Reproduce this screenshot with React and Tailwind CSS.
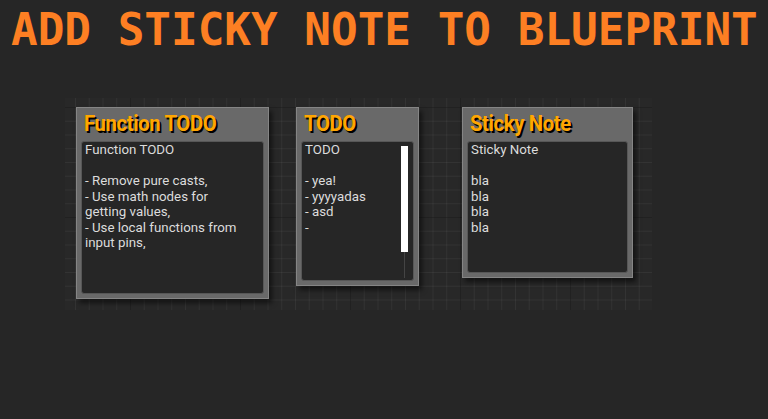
const notes = [
  {
    title: "Function TODO",
    lines: [
      "Function TODO",
      "",
      "- Remove pure casts,",
      "- Use math nodes for",
      "getting values,",
      "- Use local functions from",
      "input pins,",
    ],
    pos: "left-[11px] top-[9px] w-[193px] h-[192px]",
  },
  {
    title: "TODO",
    lines: ["TODO", "", "- yea!", "- yyyyadas", "- asd", "-"],
    pos: "left-[231px] top-[9px] w-[123px] h-[179px]",
    scroll: true,
  },
  {
    title: "Sticky Note",
    lines: ["Sticky Note", "", "bla", "bla", "bla", "bla"],
    pos: "left-[397px] top-[9px] w-[171px] h-[171px]",
  },
];

function StickyNote({ note }) {
  return (
    <div
      className={`absolute ${note.pos} flex flex-col bg-[#696969] border border-[#858585] shadow-[3px_4px_5px_rgba(0,0,0,0.55)]`}
    >
      <div className="h-[33px] shrink-0 flex items-center pl-[7px] pb-[2px]">
        <span className="inline-block origin-left scale-x-[0.9] font-['Roboto',sans-serif] font-bold text-[22.5px] leading-none tracking-[-0.4px] text-[#ffa600] [text-shadow:2px_2px_0_#000] whitespace-nowrap">
          {note.title}
        </span>
      </div>
      <div className="relative flex-1 mx-[4px] mb-[4px] bg-[#262626] border border-[#575757] rounded-[3px] px-[3px] overflow-hidden">
        {note.lines.map((line, i) => (
          <div
            key={i}
            className="h-[15.5px] text-[13.3px] leading-[15.5px] text-[#dcdcdc] font-['Roboto',sans-serif] whitespace-nowrap"
          >
            {line}
          </div>
        ))}
        {note.scroll && (
          <>
            <div className="absolute right-[5px] top-[4px] w-[7px] h-[106px] bg-white" />
            <div className="absolute right-[8px] top-[110px] w-px h-[26px] bg-[#444]" />
          </>
        )}
      </div>
    </div>
  );
}

export default function App() {
  return (
    <div className="w-[768px] h-[419px] bg-[#262626] overflow-hidden">
      <h1 className="pl-[11px] pt-[8px] font-['DejaVu_Sans_Mono',monospace] font-bold text-[44.3px] leading-[44px] text-[#fd7f23] whitespace-nowrap">
        ADD STICKY NOTE TO BLUEPRINT
      </h1>
      <div className="relative ml-[65px] mt-[46px] w-[587px] h-[212px] bg-[#282828] bg-[linear-gradient(to_right,rgba(255,255,255,0.05)_1px,transparent_1px),linear-gradient(to_bottom,rgba(255,255,255,0.05)_1px,transparent_1px)] bg-[size:13.75px_13.75px] bg-[position:10px_9px]">
        <div className="absolute inset-0 bg-[linear-gradient(to_right,rgba(0,0,0,0.35)_1px,transparent_1px),linear-gradient(to_bottom,rgba(0,0,0,0.35)_1px,transparent_1px)] bg-[size:110px_110px] bg-[position:65px_9px]" />
        {notes.map((n) => (
          <StickyNote key={n.title} note={n} />
        ))}
      </div>
    </div>
  );
}
